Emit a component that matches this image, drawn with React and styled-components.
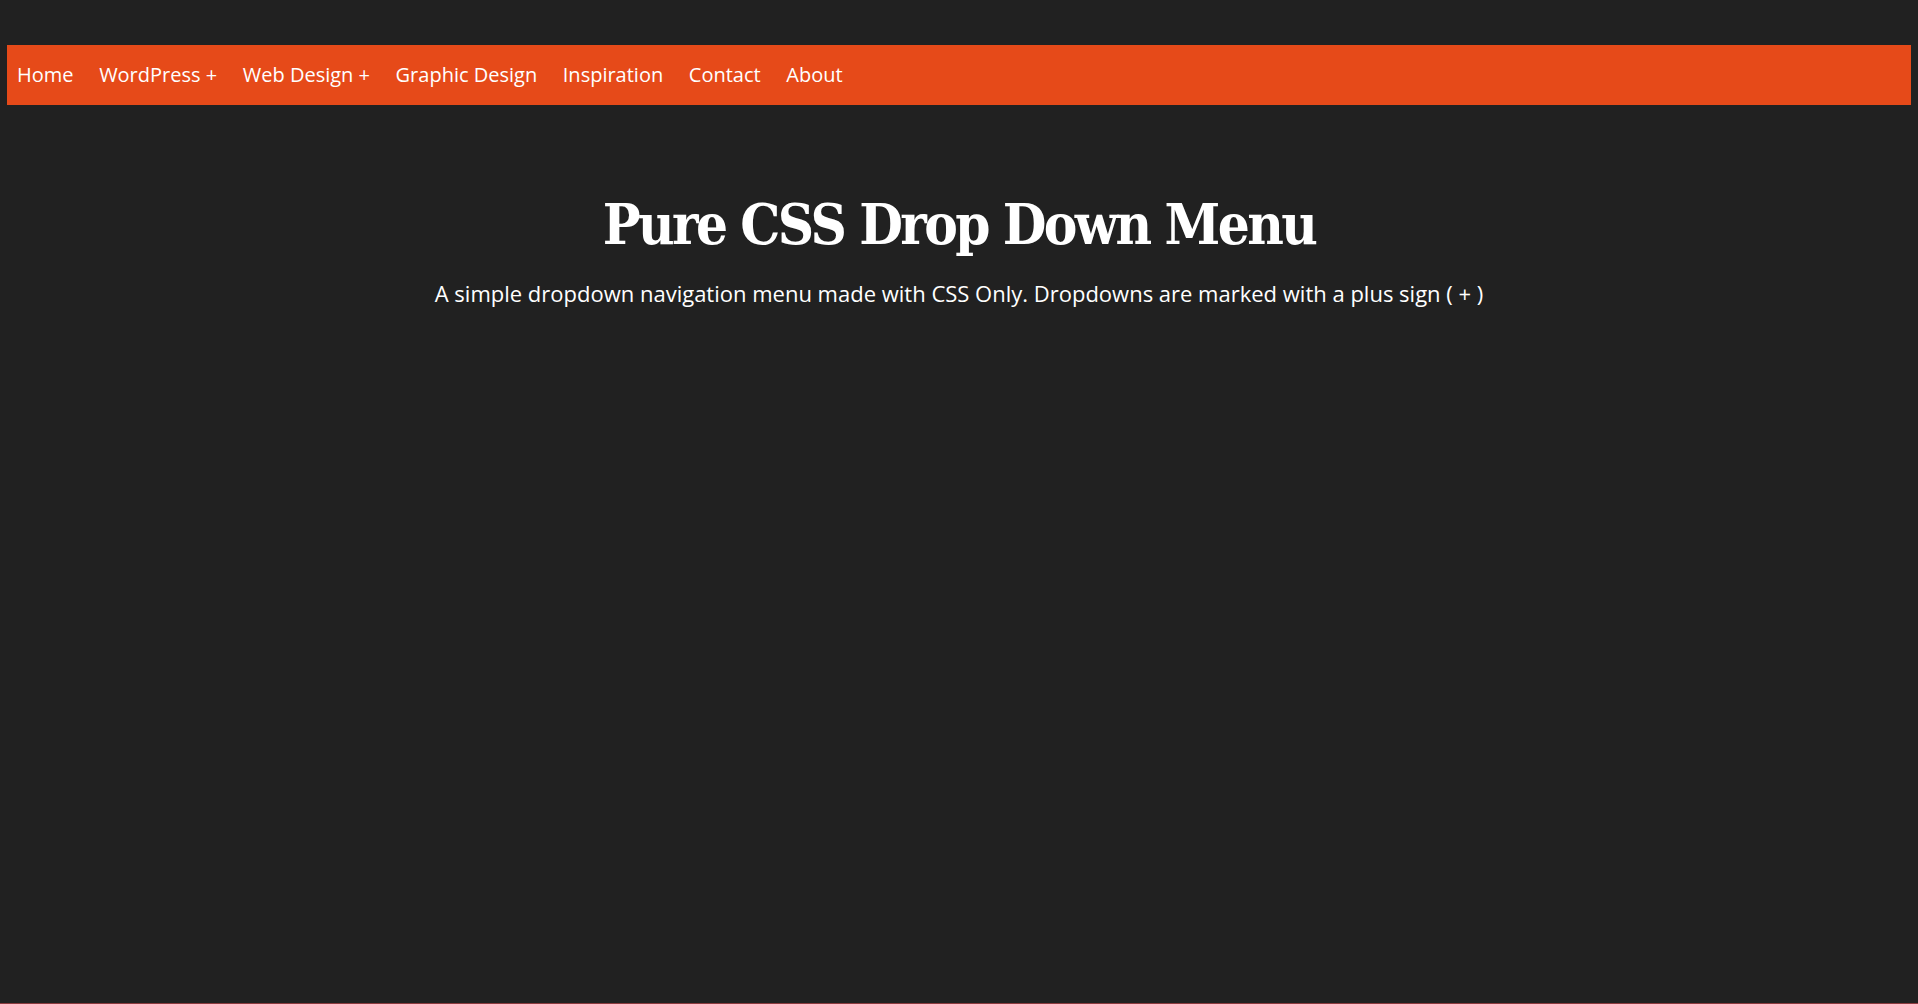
import React from 'react';
import styled, { createGlobalStyle } from 'styled-components';

const GlobalStyle = createGlobalStyle`
  html,
  body {
    margin: 0;
    padding: 0;
    background: #212121;
  }

  body {
    font-family: 'Open Sans', 'Noto Sans', sans-serif;
    color: #fff;
  }
`;

const Page = styled.div`
  display: flex;
  flex-direction: column;
  min-height: 100vh;
`;

const Main = styled.main`
  flex: 1;
  padding: 45px 7px 0;
`;

const Nav = styled.nav`
  background: #e64a19;
  height: 60px;
`;

const Menu = styled.ul`
  display: flex;
  align-items: center;
  height: 100%;
  margin: 0;
  padding: 0 0 0 10px;
  list-style: none;
`;

const MenuItem = styled.li`
  padding: 0 12.8px;
  font-size: 20px;
  line-height: 60px;
  color: #fff;
  white-space: nowrap;
  cursor: pointer;

  &:first-child {
    padding-left: 0;
  }
`;

const Header = styled.header`
  text-align: center;
  padding-top: 86px;
`;

const Title = styled.h1`
  margin: 0;
  font-family: 'DejaVu Serif', 'Liberation Serif', serif;
  font-stretch: condensed;
  font-weight: 700;
  font-size: 56px;
  line-height: 1.2;
  letter-spacing: -2.6px;
  color: #fff;
`;

const Subtitle = styled.p`
  margin: 20px 0 0;
  font-size: 22px;
  line-height: 1.4;
  color: #fff;
`;

const Footer = styled.div`
  height: 1px;
  background: #8c3b3f;
`;

const items = [
  'Home',
  'WordPress +',
  'Web Design +',
  'Graphic Design',
  'Inspiration',
  'Contact',
  'About',
];

const App = () => (
  <>
    <GlobalStyle />
    <Page>
      <Main>
        <Nav>
          <Menu>
            {items.map((item) => (
              <MenuItem key={item}>{item}</MenuItem>
            ))}
          </Menu>
        </Nav>
        <Header>
          <Title>Pure CSS Drop Down Menu</Title>
          <Subtitle>
            A simple dropdown navigation menu made with CSS Only. Dropdowns are
            marked with a plus sign ( + )
          </Subtitle>
        </Header>
      </Main>
      <Footer />
    </Page>
  </>
);

export default App;
